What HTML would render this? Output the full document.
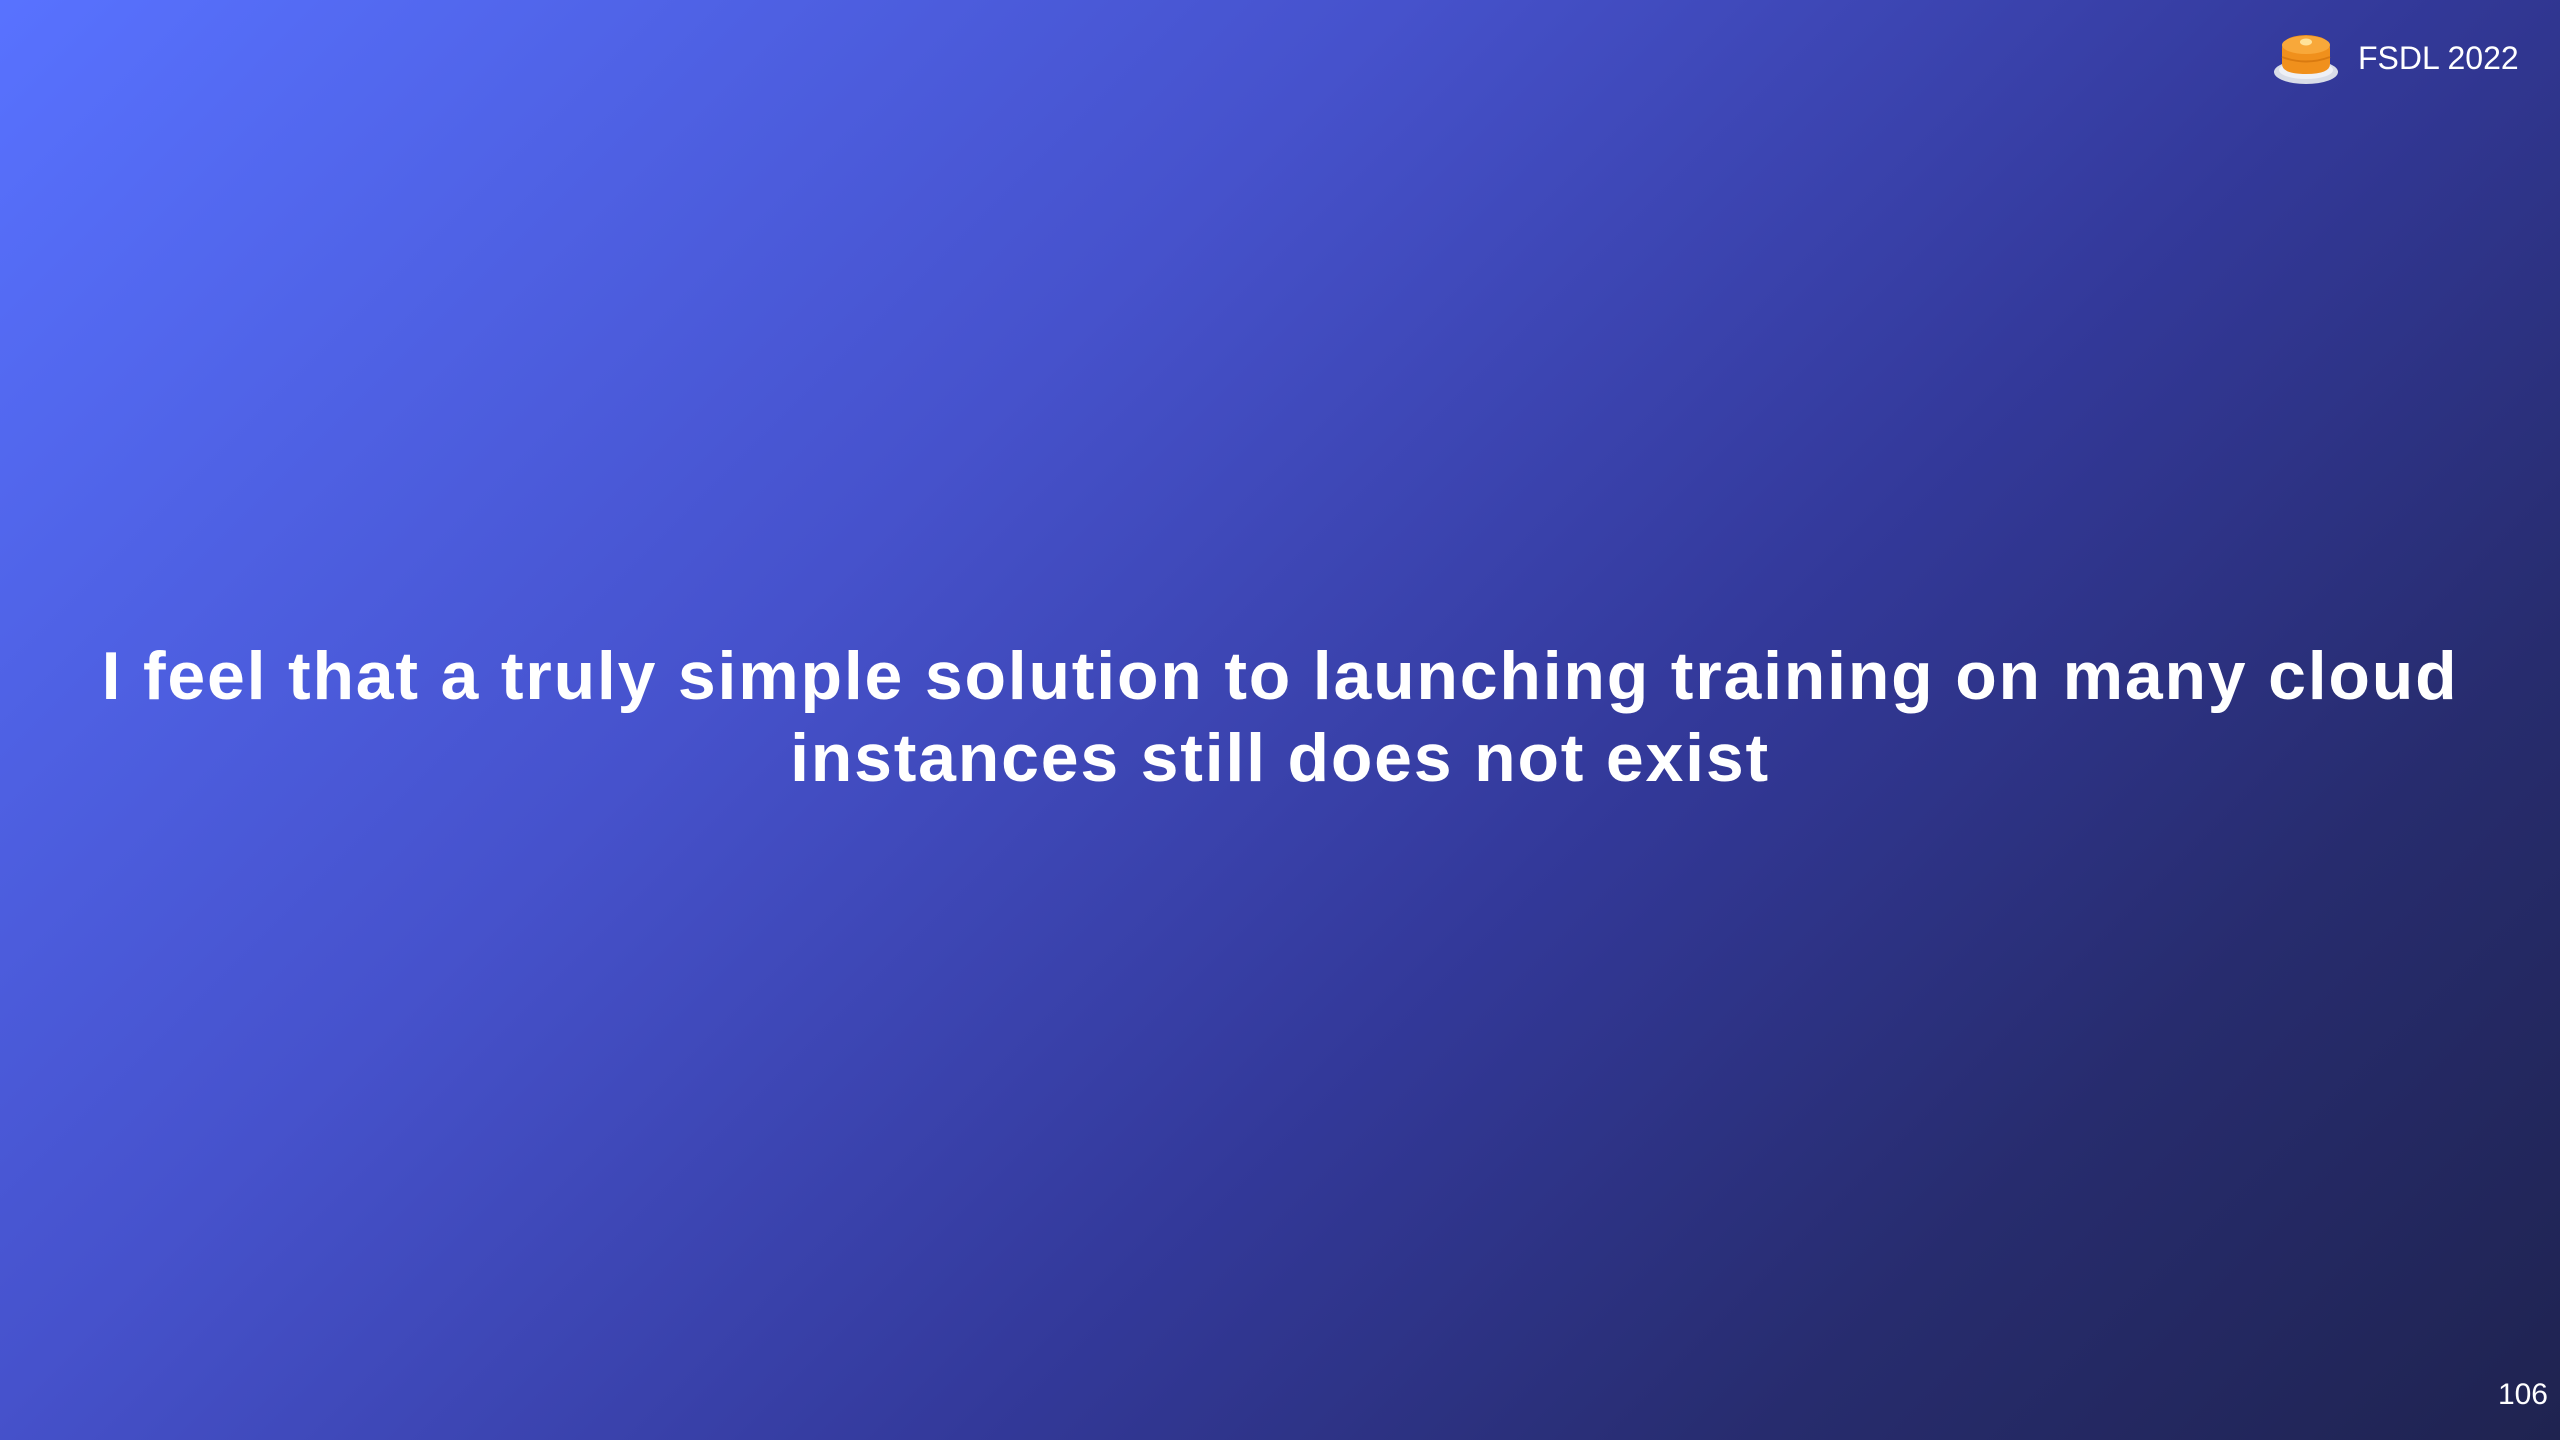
<!DOCTYPE html>
<html><head><meta charset="utf-8"><style>
html,body{margin:0;padding:0}
body{width:2560px;height:1440px;overflow:hidden;position:relative;
background:linear-gradient(135deg,#5872ff 0%,#4652cc 35%,#33399a 60%,#272c6e 80%,#1f2350 100%);
font-family:"Liberation Sans",sans-serif;color:#fff}
.main{position:absolute;left:0;width:2560px;top:635px;text-align:center;font-size:68px;line-height:82px;font-weight:bold;letter-spacing:1.8px}
.brand{position:absolute;left:2358px;top:40px;font-size:32px}
.num{position:absolute;right:12px;top:1378px;font-size:30px}
</style></head><body>
<svg style="position:absolute;left:2272px;top:30px" width="68" height="58" viewBox="0 0 68 58">
<ellipse cx="34" cy="42" rx="32" ry="12" fill="#d9dde8"/>
<ellipse cx="34" cy="40" rx="27" ry="9" fill="#eef0f6"/>
<path d="M10 18 Q10 6 34 5 Q58 6 58 18 L58 34 Q58 44 34 44 Q10 44 10 34Z" fill="#f0901c"/>
<ellipse cx="34" cy="15" rx="24" ry="9" fill="#f8a83a"/>
<path d="M10 27 Q34 36 58 27" stroke="#d97a10" stroke-width="2" fill="none"/>
<ellipse cx="34" cy="12" rx="6" ry="3.5" fill="#ffe29a"/>
</svg>
<div class="brand">FSDL 2022</div>
<div class="main">I feel that a truly simple solution to launching training on many cloud<br>instances still does not exist</div>
<div class="num">106</div>
</body></html>
